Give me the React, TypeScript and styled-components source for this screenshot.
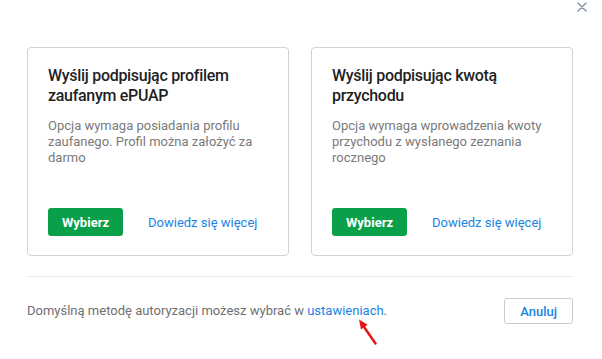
import React from "react";
import styled, { createGlobalStyle } from "styled-components";

const Global = createGlobalStyle`
  html, body { margin: 0; padding: 0; background: #ffffff; }
  body { font-family: Roboto, "Liberation Sans", Arial, sans-serif; }
  * { box-sizing: border-box; }
`;

const Dialog = styled.div`
  position: relative;
  width: 602px;
  height: 359px;
  padding: 47px 29px 0 27px;
  background: #fff;
`;

const Close = styled.button`
  position: absolute;
  top: 1px;
  right: 14px;
  width: 12px;
  height: 12px;
  padding: 0;
  border: 0;
  background: transparent;
  display: flex;
  align-items: center;
  justify-content: center;
  cursor: pointer;
`;

const Cards = styled.div`
  display: grid;
  grid-template-columns: 1fr 1fr;
  gap: 22px;
`;

const Card = styled.div`
  height: 209px;
  border: 1px solid #cfd2d6;
  border-radius: 4px;
  padding: 18px 20px 19px 20px;
  display: flex;
  flex-direction: column;
`;

const Title = styled.h3`
  margin: 0;
  font-family: Roboto, "Liberation Sans", sans-serif;
  font-weight: 500;
  font-size: 16px;
  line-height: 20px;
  color: #1f1f1f;
  letter-spacing: -0.3px;
`;

const Desc = styled.p`
  margin: 12px 0 0 0;
  font-size: 13px;
  line-height: 16px;
  color: #7a7a7a;
`;

const Actions = styled.div`
  margin-top: auto;
  display: flex;
  align-items: center;
  gap: 25px;
`;

const Primary = styled.button`
  height: 28px;
  width: 75px;
  border: 0;
  border-radius: 3px;
  background: #0aa04a;
  color: #fff;
  font-family: Roboto, "Liberation Sans", sans-serif;
  font-weight: 700;
  font-size: 13px;
  padding: 0;
  cursor: pointer;
`;

const Link = styled.a`
  color: #1a84e3;
  font-size: 13px;
  font-weight: 400;
  text-decoration: none;
  cursor: pointer;
`;

const Divider = styled.hr`
  margin: 20px 0 0 0;
  border: 0;
  border-top: 1px solid #ececec;
`;

const Footer = styled.div`
  display: flex;
  align-items: center;
  justify-content: space-between;
  padding-top: 21px;
`;

const FooterText = styled.p`
  margin: 0;
  font-size: 13px;
  line-height: 16px;
  color: #6f6f6f;
`;

const InlineLink = styled.a`
  color: #1a84e3;
  text-decoration: none;
`;

const Secondary = styled.button`
  height: 26px;
  padding: 0 15px;
  border: 1px solid #c9ccd0;
  border-radius: 3px;
  background: #fff;
  color: #1a84e3;
  font-family: Roboto, "Liberation Sans", sans-serif;
  font-weight: 500;
  font-size: 13px;
  cursor: pointer;
`;

const Annotation = styled.svg`
  position: absolute;
  left: 0;
  top: 0;
  pointer-events: none;
`;

const options = [
  {
    title: "Wyślij podpisując profilem zaufanym ePUAP",
    desc: "Opcja wymaga posiadania profilu zaufanego. Profil można założyć za darmo",
  },
  {
    title: "Wyślij podpisując kwotą przychodu",
    desc: "Opcja wymaga wprowadzenia kwoty przychodu z wysłanego zeznania rocznego",
  },
];

export default function App() {
  return (
    <>
      <Global />
      <Dialog>
        <Close aria-label="Zamknij">
          <svg width="10" height="10" viewBox="0 0 10 10">
            <path d="M1 1 L9 9 M9 1 L1 9" stroke="#8a99a8" strokeWidth="1.6" strokeLinecap="round" />
          </svg>
        </Close>
        <Cards>
          {options.map((o) => (
            <Card key={o.title}>
              <Title>{o.title}</Title>
              <Desc>{o.desc}</Desc>
              <Actions>
                <Primary>Wybierz</Primary>
                <Link>Dowiedz się więcej</Link>
              </Actions>
            </Card>
          ))}
        </Cards>
        <Divider />
        <Footer>
          <FooterText>
            Domyślną metodę autoryzacji możesz wybrać w <InlineLink>ustawieniach</InlineLink>.
          </FooterText>
          <Secondary>Anuluj</Secondary>
        </Footer>
        <Annotation width="602" height="359" viewBox="0 0 602 359">
          <line x1="375.5" y1="343.5" x2="363" y2="325.5" stroke="#e5150f" strokeWidth="2.4" strokeLinecap="round" />
          <polygon points="359,319.5 367.6,324.8 361,329.6" fill="#e5150f" />
        </Annotation>
      </Dialog>
    </>
  );
}
